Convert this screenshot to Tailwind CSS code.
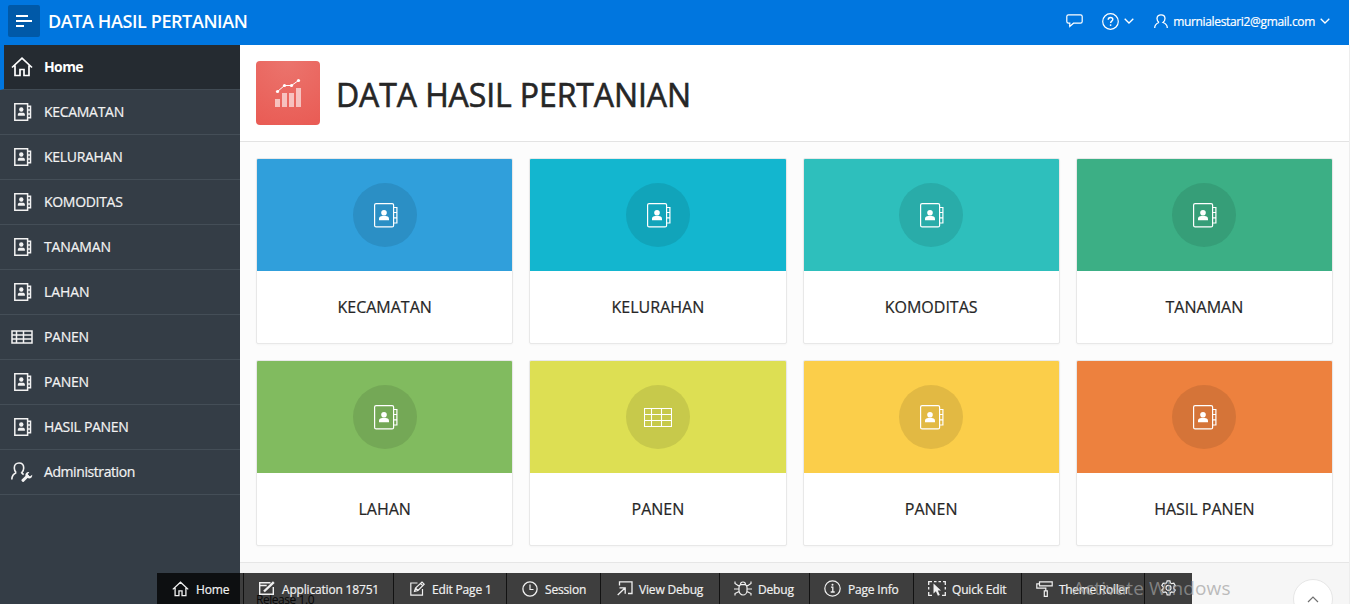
<!DOCTYPE html>
<html lang="id">
<head>
<meta charset="utf-8">
<title>DATA HASIL PERTANIAN</title>
<script src="https://cdn.jsdelivr.net/npm/@tailwindcss/browser@4"></script>
</head>
<body class="h-[604px] w-[1350px] overflow-hidden bg-[#fcfcfc] font-['Open_Sans','Noto_Sans',sans-serif] text-[#262626]">
<svg class="hidden">
  <symbol id="home" viewBox="0 0 22 20"><path d="M1 10.5 11 1.200 21 10.500M4 8.500V18.500H9V12.500H13V18.500H18V8.500" fill="none" stroke="currentColor" stroke-width="1.700"/></symbol>
  <symbol id="book" viewBox="0 0 24 25"><g fill="none" stroke="currentColor" stroke-width="1.200"><rect x=".6" y=".6" width="19" height="23.300" rx="1.500"/><path d="M19.600 4.500h3.300v15.500h-3.300M19.600 9.500h3.300M19.600 14.800h3.300"/></g><circle cx="10" cy="9.700" r="2.800" fill="currentColor"/><path d="M5 17.200v-1.400c0-1.900 1.500-2.800 3.200-2.800h3.600c1.700 0 3.200.9 3.200 2.800v1.400z" fill="currentColor"/></symbol>
  <symbol id="booksm" viewBox="0 0 18 18"><g fill="none" stroke="currentColor" stroke-width="1.500"><path d="M.8.800h12.800v16.400H.8zM13.600 3.200h2.900v11.600h-2.900M13.600 7h3M13.600 11h3"/></g><circle cx="7.300" cy="6.500" r="2.200" fill="currentColor"/><path d="M3.800 12.700v-1c0-1.400 1-2 2.200-2h2.700c1.200 0 2.200.6 2.200 2v1z" fill="currentColor"/></symbol>
  <symbol id="tablesm" viewBox="0 0 22 14"><path d="M1 1h20v12H1zM1 5h20M1 9h20M5.500 1v12M12.500 1v12" fill="none" stroke="currentColor" stroke-width="1.500"/></symbol>
  <symbol id="down" viewBox="0 0 10 6"><path d="m.7.7 4.300 4.300L9.300.7" fill="none" stroke="currentColor" stroke-width="1.300"/></symbol>
</svg>

<header class="flex h-[45px] w-[1349px] items-center bg-[#0076df] pb-[3px] pl-2 text-white">
  <button class="flex size-8 items-center justify-center rounded-[2px] bg-[#0059a8]">
    <svg class="h-[14px] w-4" viewBox="0 0 16 14"><path d="M0 2h12M0 7h16M0 12h8" stroke="#fff" stroke-width="2"/></svg>
  </button>
  <h1 class="ml-2 text-[18px] leading-6 font-semibold tracking-[-0.4px] whitespace-nowrap">DATA HASIL PERTANIAN</h1>
  <div class="ml-auto flex items-center pr-[19px]">
    <svg class="h-[14px] w-[17px]" viewBox="0 0 17 14"><path d="M2.500.8h12c1 0 1.700.8 1.700 1.700v5c0 1-.8 1.700-1.700 1.700H7.500L3.800 12.500V9.200H2.500C1.500 9.200.8 8.500.8 7.500v-5C.8 1.500 1.500.8 2.500.8z" fill="none" stroke="currentColor" stroke-width="1.200"/></svg>
    <svg class="ml-[19px] size-[17px]" viewBox="0 0 17 17"><circle cx="8.500" cy="8.500" r="7.800" fill="none" stroke="currentColor" stroke-width="1.200"/><path d="M6.200 6.700c0-1.300 1-2.200 2.300-2.200s2.300.8 2.300 2c0 1.600-2.200 1.700-2.200 3.400" fill="none" stroke="currentColor" stroke-width="1.400"/><circle cx="8.600" cy="12.100" r=".9" fill="currentColor"/></svg>
    <svg class="ml-[5px] h-[6px] w-[10px]"><use href="#down"/></svg>
    <svg class="ml-[20px] h-[15px] w-[14px]" viewBox="0 0 14 15"><path d="M5 8.500C3.600 7.500 3 6.200 3 4.600 3 2.300 4.700.8 7 .8s4 1.500 4 3.800c0 1.600-.6 2.900-2 3.900 2.500.9 4.300 1.800 4.300 5.500M5 8.500C2.500 9.400.7 10.300.7 14" fill="none" stroke="currentColor" stroke-width="1.300"/></svg>
    <span class="ml-[5px] pt-[2px] text-[12px] leading-4 tracking-[-0.34px] whitespace-nowrap [-webkit-text-stroke:0.2px]">murnialestari2@gmail.com</span>
    <svg class="ml-[5px] h-[6px] w-[10px]"><use href="#down"/></svg>
  </div>
</header>

<div class="flex h-[559px]">
  <nav class="w-60 shrink-0 bg-[#343d46] text-[14px] leading-5 tracking-[-0.3px] text-[#f2f2f2] [-webkit-text-stroke:0.2px]">
    <a class="flex h-[45px] items-center border-b border-l-4 border-b-[#414b54] border-l-[#0076df] bg-[#252b31] pl-[7px] font-bold tracking-[-0.6px] text-white"><svg class="h-5 w-[22px]"><use href="#home"/></svg><span class="ml-[11px] [-webkit-text-stroke:0px]">Home</span></a>
    <a class="flex h-[45px] items-center border-b border-[#444e57] pl-[14px]"><svg class="size-[18px]"><use href="#booksm"/></svg><span class="ml-3">KECAMATAN</span></a>
    <a class="flex h-[45px] items-center border-b border-[#444e57] pl-[14px]"><svg class="size-[18px]"><use href="#booksm"/></svg><span class="ml-3">KELURAHAN</span></a>
    <a class="flex h-[45px] items-center border-b border-[#444e57] pl-[14px]"><svg class="size-[18px]"><use href="#booksm"/></svg><span class="ml-3">KOMODITAS</span></a>
    <a class="flex h-[45px] items-center border-b border-[#444e57] pl-[14px]"><svg class="size-[18px]"><use href="#booksm"/></svg><span class="ml-3 tracking-[-0.15px]">TANAMAN</span></a>
    <a class="flex h-[45px] items-center border-b border-[#444e57] pl-[14px]"><svg class="size-[18px]"><use href="#booksm"/></svg><span class="ml-3 tracking-[-0.1px]">LAHAN</span></a>
    <a class="flex h-[45px] items-center border-b border-[#444e57] pl-[11px]"><svg class="h-[14px] w-[22px]"><use href="#tablesm"/></svg><span class="ml-[11px]">PANEN</span></a>
    <a class="flex h-[45px] items-center border-b border-[#444e57] pl-[14px]"><svg class="size-[18px]"><use href="#booksm"/></svg><span class="ml-3">PANEN</span></a>
    <a class="flex h-[45px] items-center border-b border-[#444e57] pl-[14px]"><svg class="size-[18px]"><use href="#booksm"/></svg><span class="ml-3">HASIL PANEN</span></a>
    <a class="flex h-[45px] items-center border-b border-[#444e57] pl-[11px]"><svg class="h-5 w-[22px]" viewBox="0 0 22 20"><path d="M5.200 10.800C4 9.600 3.300 8 3.300 6c0-3 1.900-5 4.700-5s4.700 2 4.700 5c0 2-.7 3.600-2 4.800.6.900 1.200 1.400 2 1.700M5.200 10.800C2.300 12 .9 13.500.8 17.500" fill="none" stroke="currentColor" stroke-width="1.600"/><path d="m12 18.300 4.500-4.300" stroke="currentColor" stroke-width="3" stroke-linecap="round"/><path d="M14.500 14c-.6-2.400 1.300-4.300 3.800-3.800l-1.500 1.900.5 1.700 1.900.5 2-1.600c.4 2.600-1.800 4.300-4.200 3.600z" fill="currentColor"/></svg><span class="ml-[11px] tracking-[-0.42px]">Administration</span></a>
  </nav>
  <main class="flex w-[1110px] flex-col border-r border-[#ededed]">
    <section class="flex h-[97px] shrink-0 items-center border-b border-[#e3e3e3] bg-white pl-4">
      <svg class="size-16 rounded-[4px] bg-[radial-gradient(circle_at_50%_0%,#eb746d,#e95b54)]" viewBox="0 0 64 64"><path d="M19 38h5v8h-5zM26 32h5v14h-5zM33 32h5v14h-5zM40 27h5v19h-5z" fill="#fff" fill-opacity=".6"/><path d="m21.500 30.500 7-6h7l7-5" fill="none" stroke="#fff" stroke-width="1"/><g fill="#fff"><circle cx="21.500" cy="30.500" r="1.600"/><circle cx="28.500" cy="24.500" r="1.600"/><circle cx="35.500" cy="24.500" r="1.600"/><circle cx="42.500" cy="19.500" r="1.600"/></g></svg>
      <h2 class="ml-4 pt-[3px] text-[32px] leading-10 font-medium tracking-[-0.1px] whitespace-nowrap [-webkit-text-stroke:0.6px]">DATA HASIL PERTANIAN</h2>
    </section>
    <section class="grid h-[420px] shrink-0 grid-cols-4 grid-rows-[186px_186px] gap-4 p-4 text-center text-[16px] leading-5 text-white">
      <article class="flex flex-col overflow-hidden rounded-[2px] border border-[#e8e8e8] bg-white shadow-[0_1px_2px_#00000008]"><div class="flex h-28 items-center justify-center bg-[#309fdb]"><span class="flex size-16 items-center justify-center rounded-full bg-[#2b8fc5] pl-[2px]"><svg class="h-[25px] w-6"><use href="#book"/></svg></span></div><h3 class="pt-[26px] text-[#262626] [-webkit-text-stroke:0.2px]">KECAMATAN</h3></article>
      <article class="flex flex-col overflow-hidden rounded-[2px] border border-[#e8e8e8] bg-white shadow-[0_1px_2px_#00000008]"><div class="flex h-28 items-center justify-center bg-[#13b6cf]"><span class="flex size-16 items-center justify-center rounded-full bg-[#11a4ba] pl-[2px]"><svg class="h-[25px] w-6"><use href="#book"/></svg></span></div><h3 class="pt-[26px] text-[#262626] [-webkit-text-stroke:0.2px]">KELURAHAN</h3></article>
      <article class="flex flex-col overflow-hidden rounded-[2px] border border-[#e8e8e8] bg-white shadow-[0_1px_2px_#00000008]"><div class="flex h-28 items-center justify-center bg-[#2ebfbc]"><span class="flex size-16 items-center justify-center rounded-full bg-[#29aca9] pl-[2px]"><svg class="h-[25px] w-6"><use href="#book"/></svg></span></div><h3 class="pt-[26px] text-[#262626] [-webkit-text-stroke:0.2px]">KOMODITAS</h3></article>
      <article class="flex flex-col overflow-hidden rounded-[2px] border border-[#e8e8e8] bg-white shadow-[0_1px_2px_#00000008]"><div class="flex h-28 items-center justify-center bg-[#3caf85]"><span class="flex size-16 items-center justify-center rounded-full bg-[#369e78] pl-[2px]"><svg class="h-[25px] w-6"><use href="#book"/></svg></span></div><h3 class="pt-[26px] text-[#262626] [-webkit-text-stroke:0.2px]">TANAMAN</h3></article>
      <article class="flex flex-col overflow-hidden rounded-[2px] border border-[#e8e8e8] bg-white shadow-[0_1px_2px_#00000008]"><div class="flex h-28 items-center justify-center bg-[#81bb5f]"><span class="flex size-16 items-center justify-center rounded-full bg-[#74a856] pl-[2px]"><svg class="h-[25px] w-6"><use href="#book"/></svg></span></div><h3 class="pt-[26px] text-[#262626] [-webkit-text-stroke:0.2px]">LAHAN</h3></article>
      <article class="flex flex-col overflow-hidden rounded-[2px] border border-[#e8e8e8] bg-white shadow-[0_1px_2px_#00000008]"><div class="flex h-28 items-center justify-center bg-[#dddf53]"><span class="flex size-16 items-center justify-center rounded-full bg-[#c7c94b]"><svg class="h-[19px] w-7" viewBox="0 0 28 19"><path d="M.5.500h27v18H.5zM0 6.500h28M0 12.500h28M7.500 0v19M17.500 0v19" fill="none" stroke="#fff" stroke-width="1.100"/></svg></span></div><h3 class="pt-[26px] text-[#262626] [-webkit-text-stroke:0.2px]">PANEN</h3></article>
      <article class="flex flex-col overflow-hidden rounded-[2px] border border-[#e8e8e8] bg-white shadow-[0_1px_2px_#00000008]"><div class="flex h-28 items-center justify-center bg-[#fbce4a]"><span class="flex size-16 items-center justify-center rounded-full bg-[#e2b943] pl-[2px]"><svg class="h-[25px] w-6"><use href="#book"/></svg></span></div><h3 class="pt-[26px] text-[#262626] [-webkit-text-stroke:0.2px]">PANEN</h3></article>
      <article class="flex flex-col overflow-hidden rounded-[2px] border border-[#e8e8e8] bg-white shadow-[0_1px_2px_#00000008]"><div class="flex h-28 items-center justify-center bg-[#ed813e]"><span class="flex size-16 items-center justify-center rounded-full bg-[#d57438] pl-[2px]"><svg class="h-[25px] w-6"><use href="#book"/></svg></span></div><h3 class="pt-[26px] text-[#262626] [-webkit-text-stroke:0.2px]">HASIL PANEN</h3></article>
    </section>
    <footer class="grow border-t border-[#e6e6e6] bg-[#f6f6f6] pt-[29px] pl-4 text-[12px] leading-4 tracking-[-0.45px] text-[#262626]">Release 1.0</footer>
  </main>
</div>

<a class="absolute top-[579px] left-[1293px] flex size-10 justify-center rounded-full border border-[#e6e6e6] bg-white pt-[16px] text-[#707070]"><svg class="h-[7px] w-[12px]" viewBox="0 0 12 7"><path d="m1 6 5-5 5 5" fill="none" stroke="currentColor" stroke-width="1.200"/></svg></a>

<div class="absolute top-[573px] left-[157px] flex h-[31px] bg-black/75 text-[12px] leading-4 tracking-[-0.18px] whitespace-nowrap text-[#f0f0f0] [-webkit-text-stroke:0.2px]">
  <a class="flex w-[87px] items-center border-r border-black/70 pl-[15px]"><svg class="h-4 w-[17px]"><use href="#home"/></svg><span class="ml-[7px] pt-[2px]">Home</span></a>
  <a class="flex w-[150px] items-center border-r border-black/70 pl-[14px]"><svg class="h-[15px] w-[17px]" viewBox="0 0 17 15"><path d="M12.500 1.700H1.700V13.300H15.300V6M1.700 4.500h7" fill="none" stroke="currentColor" stroke-width="1.400"/><path d="m6 10.500 9.800-9.300" stroke="currentColor" stroke-width="2.400"/></svg><span class="ml-[7px] pt-[2px]">Application 18751</span></a>
  <a class="flex w-[113px] items-center border-r border-black/70 pl-[16px]"><svg class="h-[15px] w-[15px]" viewBox="0 0 15 15"><path d="M7.500 2H.8v12.200h11.700V8M4.500 10.500l1-3.500 6.500-6 2.200 2.200L8 9.500zM5.500 7 8 9.500M10.500 2.500l2.200 2.200" fill="none" stroke="currentColor" stroke-width="1.200"/></svg><span class="ml-[7px] pt-[2px]">Edit Page 1</span></a>
  <a class="flex w-[94px] items-center border-r border-black/70 pl-[15px]"><svg class="size-4" viewBox="0 0 16 16"><circle cx="8" cy="8" r="7.100" fill="none" stroke="currentColor" stroke-width="1.300"/><path d="M8 3.500V8.500h3.500" fill="none" stroke="currentColor" stroke-width="1.200"/></svg><span class="ml-[7px] pt-[2px]">Session</span></a>
  <a class="flex w-[119px] items-center border-r border-black/70 pl-[16px]"><svg class="h-[15px] w-4" viewBox="0 0 16 15"><path d="M2.500 4.500V.8h12.500v11.700h-4M.7 14 8 7M2.500 6.800h5.700v6" fill="none" stroke="currentColor" stroke-width="1.300"/></svg><span class="ml-[6px] pt-[2px]">View Debug</span></a>
  <a class="flex w-[90px] items-center border-r border-black/70 pl-[14px]"><svg class="h-[15px] w-[18px]" viewBox="0 0 18 15"><path d="M5 6.500C5 5 6 3.700 7.200 3.700h3.600C12 3.700 13 5 13 6.500v3C13 12 11.200 14 9 14s-4-2-4-4.500zM6.500 3.700C6.500 2 7.500 1 9 1s2.500 1 2.500 2.700M1 .5V2.500l4.500 3M17 .5V2.500l-4.500 3M0 8h5M13 8h5M1 14.500V12.500l4-2M17 14.500V12.500l-4-2" fill="none" stroke="currentColor" stroke-width="1.200"/></svg><span class="ml-[6px] pt-[2px]">Debug</span></a>
  <a class="flex w-[104px] items-center border-r border-black/70 pl-[14px]"><svg class="size-[17px]" viewBox="0 0 17 17"><circle cx="8.500" cy="8.500" r="7.700" fill="none" stroke="currentColor" stroke-width="1.200"/><path d="M7 7.200h1.800v4.600M6.700 12h4" fill="none" stroke="currentColor" stroke-width="1.300"/><circle cx="8.500" cy="4.800" r="1" fill="currentColor"/></svg><span class="ml-[7px] pt-[2px]">Page Info</span></a>
  <a class="flex w-[108px] items-center border-r border-black/70 pl-[14px]"><svg class="h-[15px] w-[18px]" viewBox="0 0 18 15"><path d="M.7 4V.7H4M6 .7h2.500M10.500.7H13M15 .7h2.300V4M.7 6v2.500M.7 11v3.300H4M17.300 6v2.500M17.300 11v3.300H14" fill="none" stroke="currentColor" stroke-width="1.300"/><path d="M5.500 2.500v10l2.400-2.200 2 4.400 1.900-.8-2-4.300h3.200z" fill="currentColor"/></svg><span class="ml-[6px] pt-[2px]">Quick Edit</span></a>
  <a class="flex w-[123px] items-center border-r border-black/70 pl-[14px]"><svg class="h-4 w-[17px]" viewBox="0 0 17 16"><path d="M3.500.8h12.700v4H3.500zM3.500 2.800H.8v4.400h9v2.600M8.300 9.800h3v5.500h-3z" fill="none" stroke="currentColor" stroke-width="1.200"/></svg><span class="ml-[6px] pt-[2px] tracking-[-0.3px]">Theme Roller</span></a>
  <a class="flex w-[47px] items-center pl-[15px]"><svg class="size-[17px]" viewBox="0 0 17 17"><path d="M7.100.8h2.800l.5 2.100 1.300.8 2.100-.6 1.400 2.400-1.500 1.500v1.500l1.500 1.600-1.400 2.400-2.100-.6-1.300.8-.5 2.100H7.100l-.5-2.100-1.300-.8-2.100.6-1.400-2.400 1.500-1.600V7l-1.500-1.500 1.400-2.400 2.100.6 1.300-.8z" fill="none" stroke="currentColor" stroke-width="1.200"/><circle cx="8.500" cy="7.900" r="2.500" fill="none" stroke="currentColor" stroke-width="1.200"/></svg></a>
</div>
<div class="pointer-events-none absolute top-[575px] left-[1073px] text-[19px] leading-[26px] tracking-[0.1px] whitespace-nowrap text-[#a0a0a0]/70">Activate Windows</div>
</body>
</html>
